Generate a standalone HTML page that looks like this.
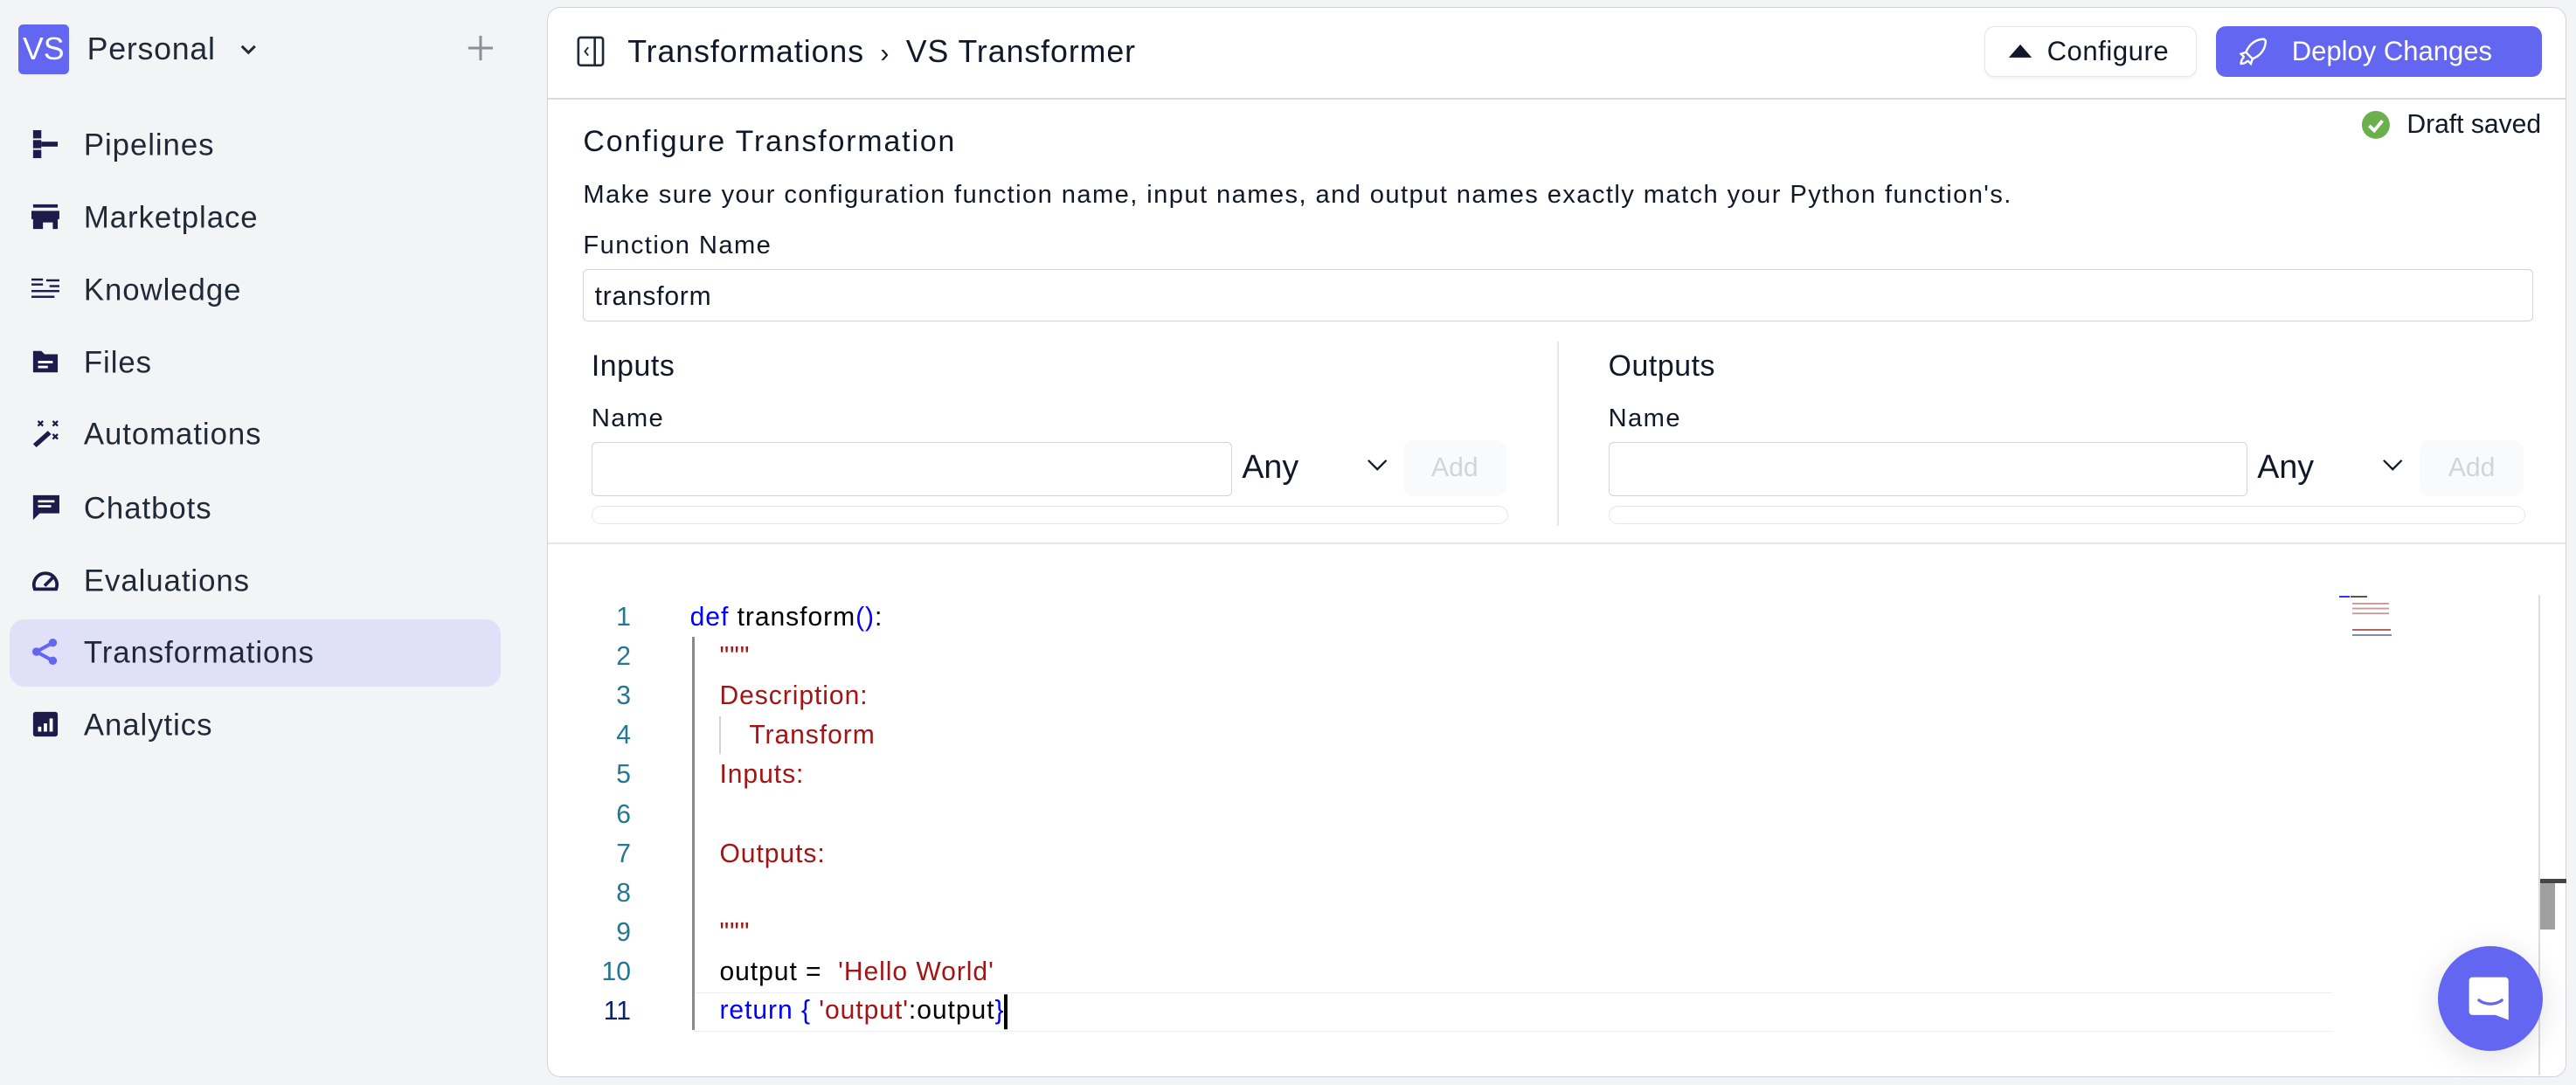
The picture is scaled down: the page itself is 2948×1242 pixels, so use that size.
<!DOCTYPE html>
<html><head><meta charset="utf-8"><style>
html,body{margin:0;padding:0;width:2948px;height:1242px;overflow:hidden;background:#f3f4f6}
#w{zoom:1.8801;width:1568px;height:661px;position:relative;font-family:"Liberation Sans",sans-serif;color:#1f2937}
.a{position:absolute;white-space:nowrap}
.nav{position:absolute;left:51px;font-size:18.5px;letter-spacing:0.5px;color:#1f2937;transform:translateY(-50%)}
.ic{position:absolute;left:19px;width:17px;height:17px;transform:translateY(-50%)}
.lbl{font-size:15.5px;color:#111827;letter-spacing:0.75px}
.inp{position:absolute;border:1px solid #d1d5db;border-radius:3px;background:#fff;box-sizing:border-box}
.ln{position:absolute;width:40px;left:344px;text-align:right;font-size:16px;color:#237893;transform:translateY(-50%)}
.cd{position:absolute;font-size:16px;letter-spacing:0.5px;transform:translateY(-50%);white-space:pre;color:#000}
.r{color:#a31515}.b{color:#0000ff}
</style></head><body><div id="w">
<!-- sidebar -->
<div class="a" style="left:11px;top:15px;width:31px;height:30px;background:#6366f1;border-radius:3px;color:#fff;font-size:19px;line-height:30px;text-align:center">VS</div>
<div class="a" style="left:53px;top:19px;font-size:19px;letter-spacing:0.4px;color:#1f2937">Personal</div>
<svg class="a" style="left:145px;top:26px" width="12" height="9" viewBox="0 0 12 9"><path d="M2 2l4 4 4-4" stroke="#1f2937" stroke-width="1.6" fill="none"/></svg>
<svg class="a" style="left:284px;top:21px" width="17" height="17"><path d="M8.5 1v15M1 8.5h15" stroke="#8b8f97" stroke-width="1.6"/></svg>
<div class="a" style="left:6px;top:377px;width:299px;height:41px;background:#e0e0f9;border-radius:9px"></div>

<svg class="ic" style="top:88px" viewBox="0 0 17 17"><rect x="1" y="0" width="5" height="5" fill="#1e1b4b"/><rect x="1" y="6" width="5" height="5" fill="#1e1b4b"/><rect x="1" y="12" width="5" height="5" fill="#1e1b4b"/><rect x="6" y="7" width="10" height="3" fill="#1e1b4b"/></svg><div class="nav" style="top:89px">Pipelines</div>
<svg class="ic" style="top:132px" viewBox="0 0 17 17"><rect x="1" y="1" width="15" height="2" fill="#1e1b4b"/><path d="M0 5h17v5H0z M1 10h15v6h-3v-4H7v4H1z" fill="#1e1b4b"/></svg><div class="nav" style="top:133px">Marketplace</div>
<svg class="ic" style="top:176px" viewBox="0 0 17 17"><g fill="#1e1b4b"><rect x="0" y="2" width="7" height="1.3"/><rect x="0" y="5" width="7" height="1.3"/><rect x="9" y="2.5" width="8" height="1.3"/><rect x="11" y="6" width="6" height="1.3"/><rect x="0" y="9" width="17" height="1.3"/><rect x="0" y="12.5" width="14" height="1.3"/></g></svg><div class="nav" style="top:177px">Knowledge</div>
<svg class="ic" style="top:220px" viewBox="0 0 17 17"><path d="M1 2h5l2 2h8v11H1z" fill="#1e1b4b"/><rect x="4" y="8" width="9" height="1.5" fill="#fff"/><rect x="4" y="11" width="6" height="1.5" fill="#fff"/></svg><div class="nav" style="top:221px">Files</div>
<svg class="ic" style="top:264px" viewBox="0 0 17 17"><path d="M1 15l9-8 2 2-9 8z" fill="#1e1b4b"/><path d="M4 1l3 3M7 1L4 4M13 1l3 3M16 1l-3 3M13 9l3 3M16 9l-3 3" stroke="#1e1b4b" stroke-width="1.2"/></svg><div class="nav" style="top:265px">Automations</div>
<svg class="ic" style="top:309px" viewBox="0 0 17 17"><path d="M1 1h16v11H5l-4 4z" fill="#1e1b4b"/><rect x="4" y="4" width="10" height="1.4" fill="#fff"/><rect x="4" y="7" width="8" height="1.4" fill="#fff"/></svg><div class="nav" style="top:310px">Chatbots</div>
<svg class="ic" style="top:353px" viewBox="0 0 17 17"><path d="M2 14A7 7 0 1 1 15 14z" fill="none" stroke="#1e1b4b" stroke-width="2"/><path d="M8 12l5-5" stroke="#1e1b4b" stroke-width="2"/></svg><div class="nav" style="top:354px">Evaluations</div>
<svg class="ic" style="top:397px" viewBox="0 0 17 17"><path d="M3 8.5L13 3M3 8.5L13 14" stroke="#6366f1" stroke-width="2.2"/><circle cx="3" cy="8.5" r="2.5" fill="#6366f1"/><circle cx="13" cy="3" r="2.5" fill="#6366f1"/><circle cx="13" cy="14" r="2.5" fill="#6366f1"/></svg><div class="nav" style="top:398px">Transformations</div>
<svg class="ic" style="top:441px" viewBox="0 0 17 17"><rect x="1" y="1" width="15" height="15" rx="1.5" fill="#1e1b4b"/><rect x="4" y="10" width="2" height="3" fill="#fff"/><rect x="7.5" y="8" width="2" height="5" fill="#fff"/><rect x="11" y="5" width="2" height="8" fill="#fff"/></svg><div class="nav" style="top:442px">Analytics</div>

<!-- main panel -->
<div class="a" style="left:333px;top:4px;width:1229px;height:652px;background:#fff;border:1px solid #d1d5db;border-radius:8px;box-sizing:border-box;overflow:hidden">
 <div class="a" style="left:0;top:55px;width:100%;height:1px;background:#d9dbe0"></div>
 <div class="a" style="left:0;top:326px;width:100%;height:1px;background:#e5e7eb"></div>
</div>
<svg class="a" style="left:351px;top:22px" width="18" height="20" viewBox="0 0 18 20"><rect x="1" y="1" width="15" height="17" rx="1.5" fill="none" stroke="#1f2937" stroke-width="1.4"/><path d="M11 1v17" stroke="#1f2937" stroke-width="1.4"/><path d="M7 7l-2 2.5 2 2.5" stroke="#1f2937" stroke-width="1" fill="none"/></svg>
<div class="a" style="left:382px;top:21px;font-size:19px;letter-spacing:0.5px;color:#111827">Transformations <span style="font-size:16px;padding:0 4px">›</span> VS Transformer</div>
<div class="a" style="left:1208px;top:16px;width:129px;height:31px;border:1px solid #e5e7eb;border-radius:6px;box-sizing:border-box;box-shadow:0 1px 2px rgba(0,0,0,.06);background:#fff"></div>
<svg class="a" style="left:1222px;top:26px" width="16" height="10"><path d="M1 9L8 1l7 8z" fill="#111827"/></svg>
<div class="a" style="left:1246px;top:22px;font-size:16.5px;letter-spacing:0.3px;color:#111827">Configure</div>
<div class="a" style="left:1349px;top:16px;width:198px;height:31px;background:#6366f1;border-radius:6px"></div>
<svg class="a" style="left:1361px;top:22px" width="20" height="20" viewBox="0 0 20 20"><path d="M17 2c-5 0-9 3-11 8l4 4c5-2 8-6 8-11z M6 10l-3 1 2 2 M10 14l-1 3-2-2 M5 13c-2 1-2 4-2 4s3 0 4-2" stroke="#fff" stroke-width="1.3" fill="none"/></svg>
<div class="a" style="left:1395px;top:22px;font-size:16.5px;color:#fff">Deploy Changes</div>

<svg class="a" style="left:1437px;top:67px" width="18" height="18"><circle cx="9" cy="9" r="8.5" fill="#6ab04c"/><path d="M5 9.5l3 3 5-6" stroke="#fff" stroke-width="2" fill="none"/></svg>
<div class="a" style="left:1465px;top:67px;font-size:16px;color:#111827">Draft saved</div>
<div class="a" style="left:355px;top:76px;font-size:18px;letter-spacing:1px;color:#111827">Configure Transformation</div>
<div class="a lbl" style="left:355px;top:110px">Make sure your configuration function name, input names, and output names exactly match your Python function's.</div>
<div class="a lbl" style="left:355px;top:141px">Function Name</div>
<div class="inp" style="left:355px;top:164px;width:1187px;height:32px"></div>
<div class="a" style="left:362px;top:172px;font-size:16px;letter-spacing:0.4px;color:#111827">transform</div>

<div class="a" style="left:948px;top:208px;width:1px;height:112px;background:#e5e7eb"></div>
<div class="a" style="left:360px;top:213px;font-size:18px;letter-spacing:0.3px;color:#111827">Inputs</div>
<div class="a lbl" style="left:360px;top:246px">Name</div>
<div class="inp" style="left:360px;top:269px;width:390px;height:33px"></div>
<div class="a" style="left:756px;top:273px;font-size:20px;color:#111827">Any</div>
<svg class="a" style="left:832px;top:279px" width="13" height="8"><path d="M1 1l5.5 5.5L12 1" stroke="#111827" stroke-width="1.2" fill="none"/></svg>
<div class="a" style="left:854px;top:268px;width:63px;height:34px;background:#f9fafb;border-radius:6px;color:#d1d5db;font-size:16px;line-height:34px;text-align:center">Add</div>
<div class="a" style="left:360px;top:308px;width:558px;height:11px;border:1px solid #e5e7eb;border-radius:6px;box-sizing:border-box"></div>

<div class="a" style="left:979px;top:213px;font-size:18px;letter-spacing:0.3px;color:#111827">Outputs</div>
<div class="a lbl" style="left:979px;top:246px">Name</div>
<div class="inp" style="left:979px;top:269px;width:389px;height:33px"></div>
<div class="a" style="left:1374px;top:273px;font-size:20px;color:#111827">Any</div>
<svg class="a" style="left:1450px;top:279px" width="13" height="8"><path d="M1 1l5.5 5.5L12 1" stroke="#111827" stroke-width="1.2" fill="none"/></svg>
<div class="a" style="left:1473px;top:268px;width:63px;height:34px;background:#f9fafb;border-radius:6px;color:#d1d5db;font-size:16px;line-height:34px;text-align:center">Add</div>
<div class="a" style="left:979px;top:308px;width:558px;height:11px;border:1px solid #e5e7eb;border-radius:6px;box-sizing:border-box"></div>

<!-- code -->
<div class="a" style="left:422px;top:604px;width:998px;height:23px;border-top:1px solid #eee;border-bottom:1px solid #eee"></div>
<div class="a" style="left:421px;top:388px;width:2px;height:239px;background:#8a8a8a"></div>
<div class="a" style="left:438px;top:436px;width:1px;height:23px;background:#d3d3d3"></div>
<div class="ln" style="top:376px">1</div><div class="ln" style="top:400px">2</div><div class="ln" style="top:424px">3</div><div class="ln" style="top:448px">4</div><div class="ln" style="top:472px">5</div><div class="ln" style="top:496px">6</div><div class="ln" style="top:520px">7</div><div class="ln" style="top:544px">8</div><div class="ln" style="top:568px">9</div><div class="ln" style="top:592px">10</div><div class="ln" style="top:616px;color:#0b216f">11</div>
<div class="cd" style="left:420px;top:376px"><span class="b">def</span> transform<span class="b">()</span>:</div>
<div class="cd r" style="left:438px;top:400px">"""</div>
<div class="cd r" style="left:438px;top:424px">Description:</div>
<div class="cd r" style="left:456px;top:448px">Transform</div>
<div class="cd r" style="left:438px;top:472px">Inputs:</div>
<div class="cd r" style="left:438px;top:520px">Outputs:</div>
<div class="cd r" style="left:438px;top:568px">"""</div>
<div class="cd" style="left:438px;top:592px">output =  <span class="r">'Hello World'</span></div>
<div class="cd" style="left:438px;top:616px"><span class="b">return</span> <span class="b">{</span> <span class="r">'output'</span>:output<span class="b">}</span><span style="display:inline-block;width:2px;height:21px;background:#000;vertical-align:middle"></span></div>
<!-- minimap -->
<div class="a" style="left:1424px;top:363px;width:6px;height:1px;background:#33f"></div><div class="a" style="left:1431px;top:363px;width:10px;height:1px;background:#555"></div>
<div class="a" style="left:1432px;top:367px;width:22px;height:8px;background:linear-gradient(#c99 1px,transparent 1px) 0 0/100% 3px"></div>
<div class="a" style="left:1432px;top:383px;width:23px;height:1px;background:#a66"></div><div class="a" style="left:1432px;top:386px;width:24px;height:1px;background:#88a"></div>
<!-- scrollbar -->
<div class="a" style="left:1545px;top:362px;width:1px;height:293px;background:#ddd"></div>
<div class="a" style="left:1546px;top:535px;width:16px;height:3px;background:#444"></div>
<div class="a" style="left:1546px;top:538px;width:9px;height:28px;background:#a0a0a0"></div>
<!-- chat -->
<div class="a" style="left:1484px;top:576px;width:64px;height:64px;border-radius:50%;background:#6366f1;box-shadow:0 4px 20px rgba(0,0,0,.12)"></div>
<svg class="a" style="left:1500px;top:592px" width="32" height="32" viewBox="0 0 32 32"><path d="M5 3h20a2 2 0 0 1 2 2v24l-8-3H5a2 2 0 0 1-2-2V5a2 2 0 0 1 2-2z" fill="#fff"/><path d="M9 17c4 3 10 3 14 0" stroke="#6366f1" stroke-width="1.8" fill="none" stroke-linecap="round"/></svg>
</div></body></html>
